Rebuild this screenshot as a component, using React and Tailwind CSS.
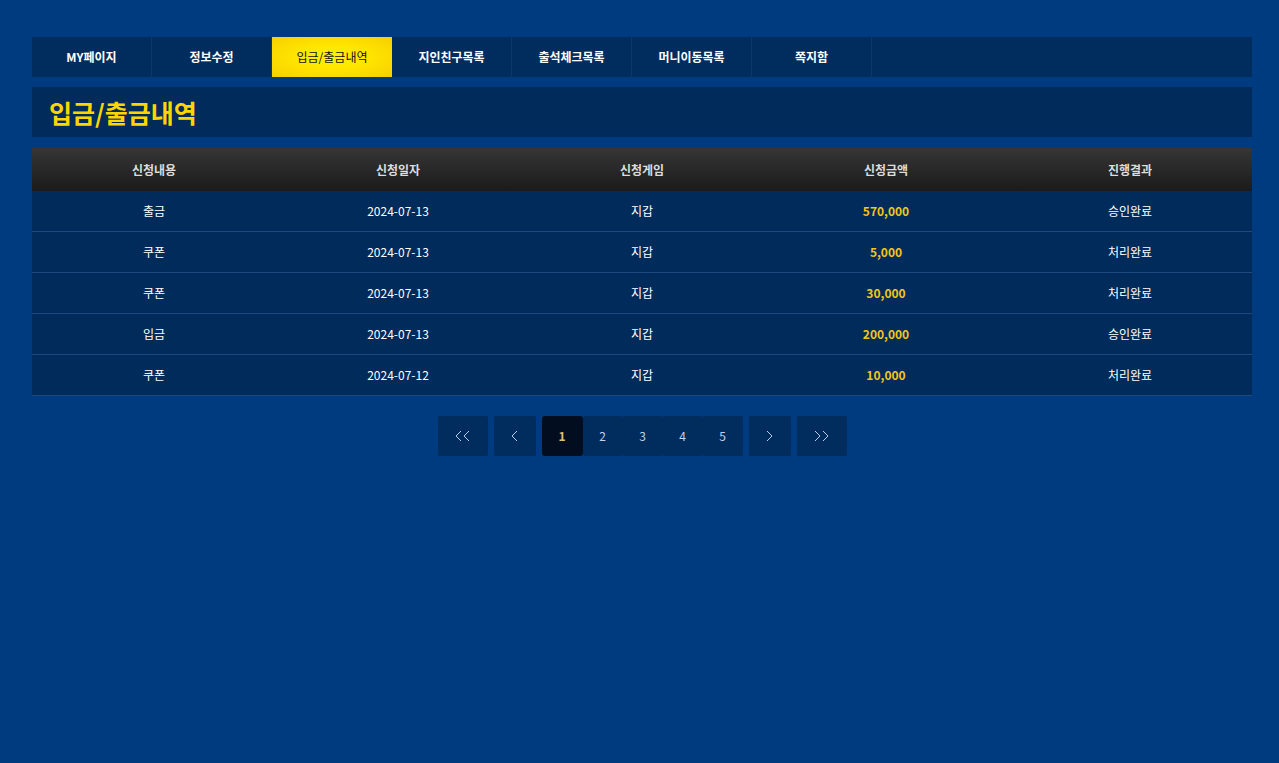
import React from "react";

const tabs = ["MY페이지", "정보수정", "입금/출금내역", "지인친구목록", "출석체크목록", "머니이동목록", "쪽지함"];

const rows = [
  ["출금", "2024-07-13", "지갑", "570,000", "승인완료"],
  ["쿠폰", "2024-07-13", "지갑", "5,000", "처리완료"],
  ["쿠폰", "2024-07-13", "지갑", "30,000", "처리완료"],
  ["입금", "2024-07-13", "지갑", "200,000", "승인완료"],
  ["쿠폰", "2024-07-12", "지갑", "10,000", "처리완료"],
];

const font = { fontFamily: '"Noto Sans CJK KR", "Noto Sans", sans-serif' };

// thin chevron arrows for the pager
function Chevrons({ dir, count }) {
  const w = count === 2 ? 16 : 7;
  const pts = [];
  for (let i = 0; i < count; i++) {
    const x0 = 1 + i * 8;
    pts.push(dir === "left" ? `${x0 + 5},1 ${x0},6 ${x0 + 5},11` : `${x0},1 ${x0 + 5},6 ${x0},11`);
  }
  return (
    <svg width={w} height="12" viewBox={`0 0 ${w} 12`} fill="none" stroke="#b9cbe4" strokeWidth="1">
      {pts.map((p, i) => (
        <polyline key={i} points={p} />
      ))}
    </svg>
  );
}

export default function App() {
  return (
    <div className="min-h-[763px] w-full bg-[#003a7f] pl-8 pr-[27px] pt-[37px]" style={font}>
      {/* tab menu */}
      <div className="flex h-10 w-full bg-[#002d5d]">
        {tabs.map((t, i) =>
          i === 2 ? (
            <div
              key={t}
              className="flex w-[120px] items-center justify-center bg-[radial-gradient(ellipse_at_center,#fff200_0%,#ffe400_45%,#f5cf00_100%)] text-[12px] text-[#111]"
            >
              {t}
            </div>
          ) : (
            <div
              key={t}
              className="flex w-[120px] items-center justify-center border-r border-[#0b3868] text-[12px] font-bold text-white"
            >
              {t}
            </div>
          )
        )}
      </div>

      {/* page title */}
      <div className="mt-[10px] flex h-[50px] items-center bg-[#002b5b] pl-[17px]">
        <h1 className="text-[25px] font-bold leading-none text-[#ffd500]">입금/출금내역</h1>
      </div>

      {/* history table */}
      <div className="mt-[11px]">
        <div className="grid h-[43px] grid-cols-5 items-center bg-gradient-to-b from-[#363636] to-[#1b1b1b] text-[12px] font-bold text-[#dddddd]">
          {["신청내용", "신청일자", "신청게임", "신청금액", "진행결과"].map((h) => (
            <div key={h} className="text-center">{h}</div>
          ))}
        </div>
        {rows.map((r, i) => (
          <div
            key={i}
            className="grid h-[41px] grid-cols-5 items-center border-b border-[#1c4a7f] bg-[#002b5b] text-[12px] text-white"
          >
            <div className="text-center">{r[0]}</div>
            <div className="text-center">{r[1]}</div>
            <div className="text-center">{r[2]}</div>
            <div className="text-center font-bold text-[#f5c518]">{r[3]}</div>
            <div className="text-center">{r[4]}</div>
          </div>
        ))}
      </div>

      {/* pagination */}
      <div className="mt-5 flex justify-center text-[12px] text-[#c3d3ea]">
        <div className="flex h-10 w-[50px] items-center justify-center rounded-[2px] bg-[#002c5e]">
          <Chevrons dir="left" count={2} />
        </div>
        <div className="ml-[6px] flex h-10 w-[42px] items-center justify-center rounded-[2px] bg-[#002c5e]">
          <Chevrons dir="left" count={1} />
        </div>
        <div className="ml-[6px] flex">
          <div className="flex h-10 w-[41px] items-center justify-center rounded-[3px] bg-[#020e20] font-bold text-[#d8c27a]">1</div>
          {["2", "3", "4", "5"].map((n) => (
            <div key={n} className="flex h-10 w-10 items-center justify-center rounded-[2px] bg-[#002c5e]">{n}</div>
          ))}
        </div>
        <div className="ml-[6px] flex h-10 w-[42px] items-center justify-center rounded-[2px] bg-[#002c5e]">
          <Chevrons dir="right" count={1} />
        </div>
        <div className="ml-[6px] flex h-10 w-[50px] items-center justify-center rounded-[2px] bg-[#002c5e]">
          <Chevrons dir="right" count={2} />
        </div>
      </div>
    </div>
  );
}
